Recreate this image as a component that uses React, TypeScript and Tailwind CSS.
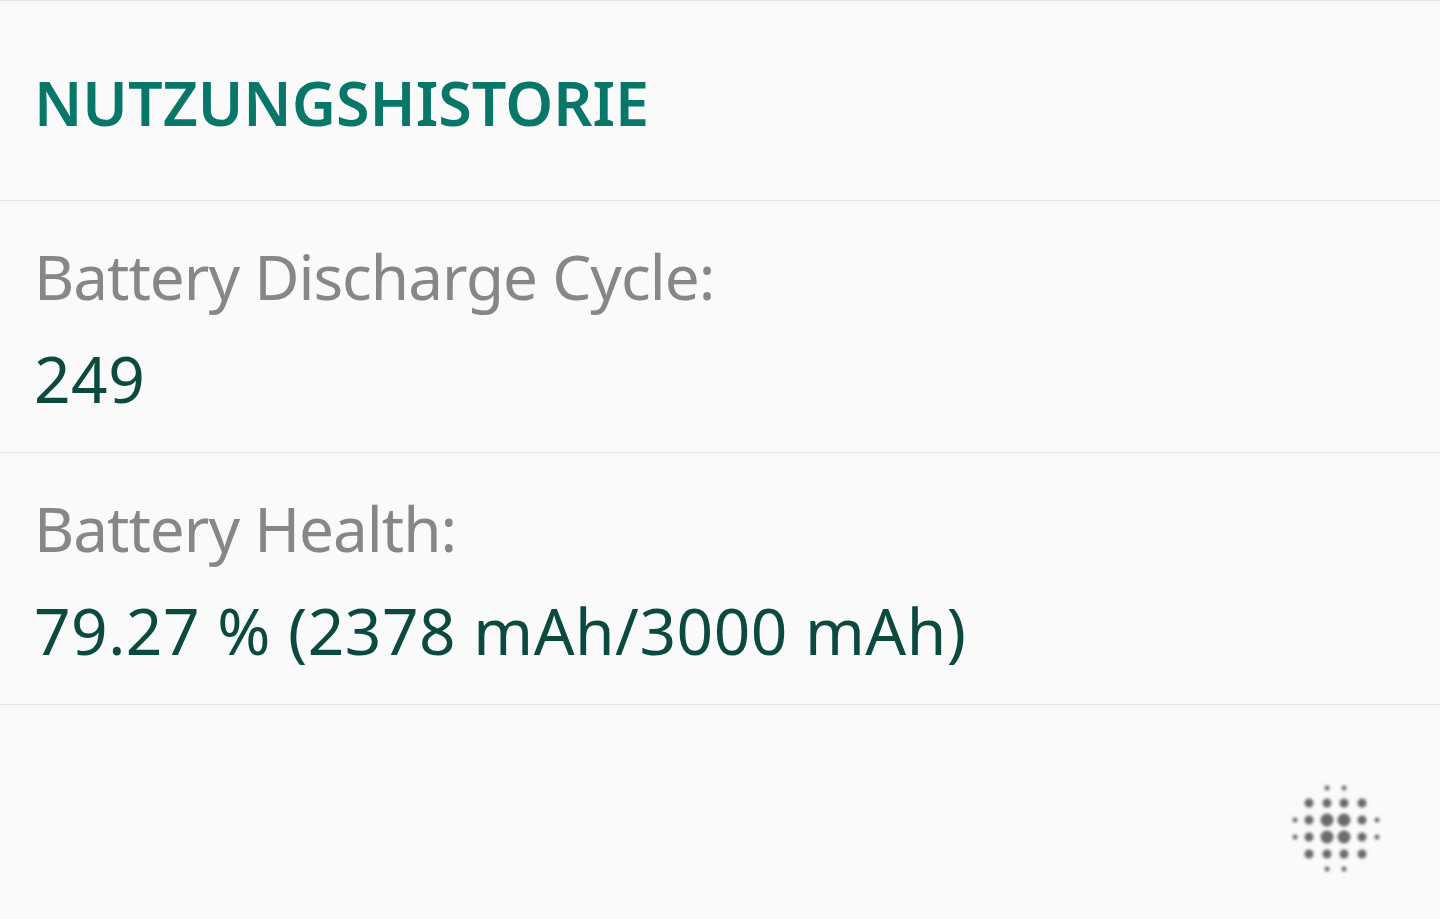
import React from "react";

interface InfoRow {
  label: string;
  value: string;
}

const rows: InfoRow[] = [
  { label: "Battery Discharge Cycle:", value: "249" },
  { label: "Battery Health:", value: "79.27 % (2378 mAh/3000 mAh)" },
];

function DotsIcon() {
  // blurred halftone dots (bottom-right corner)
  const dots: { x: number; y: number; r: number }[] = [];
  const cols = [1295, 1309, 1327, 1344, 1362, 1377];
  const addRow = (y: number, radii: number[]) =>
    radii.forEach((r, i) => {
      if (r > 0) dots.push({ x: cols[i], y, r });
    });
  addRow(787, [0, 0, 2.5, 2.5, 0, 0]);
  addRow(802, [0, 4.5, 4.5, 4.5, 4.5, 0]);
  addRow(819, [2.5, 4.5, 6.5, 6.5, 4.5, 2.5]);
  addRow(836, [2.5, 4.5, 6.5, 6.5, 4.5, 2.5]);
  addRow(853, [0, 4.5, 4.5, 4.5, 4.5, 0]);
  addRow(868, [0, 0, 2.5, 2.5, 0, 0]);
  return (
    <svg width="100" height="100" viewBox="1286 778 100 100">
      <defs>
        <filter id="blur">
          <feGaussianBlur stdDeviation="1.8" />
        </filter>
      </defs>
      <g filter="url(#blur)" fill="#6a6a6a">
        {dots.map((d, i) => (
          <circle key={i} cx={d.x} cy={d.y} r={d.r} />
        ))}
      </g>
    </svg>
  );
}

export default function App() {
  return (
    <main
      className="flex h-[919px] w-[1440px] flex-col overflow-hidden bg-[#fafafa]"
      style={{ fontFamily: '"Noto Sans", "Open Sans", sans-serif' }}
    >
      {/* Header */}
      <div className="flex h-[201px] items-center border-t border-b border-[#e2e2e2] px-[34px] pt-[4px]">
        <h1 className="text-[61px] font-semibold leading-none text-[#08776a]">
          NUTZUNGSHISTORIE
        </h1>
      </div>

      {/* Rows */}
      {rows.map((row) => (
        <div
          key={row.label}
          className="flex h-[252px] flex-col border-b border-[#e2e2e2] px-[34px] pt-[39px]"
        >
          <p className="text-[62px] leading-[72px] tracking-[-1px] text-[#878787]">
            {row.label}
          </p>
          <p className="mt-[31px] text-[64px] leading-[72px] tracking-[0.5px] text-[#0c4a3f]">
            {row.value}
          </p>
        </div>
      ))}

      {/* Footer */}
      <div className="flex flex-1 items-start justify-end pr-[54px] pt-[74px]">
        <DotsIcon />
      </div>
    </main>
  );
}
